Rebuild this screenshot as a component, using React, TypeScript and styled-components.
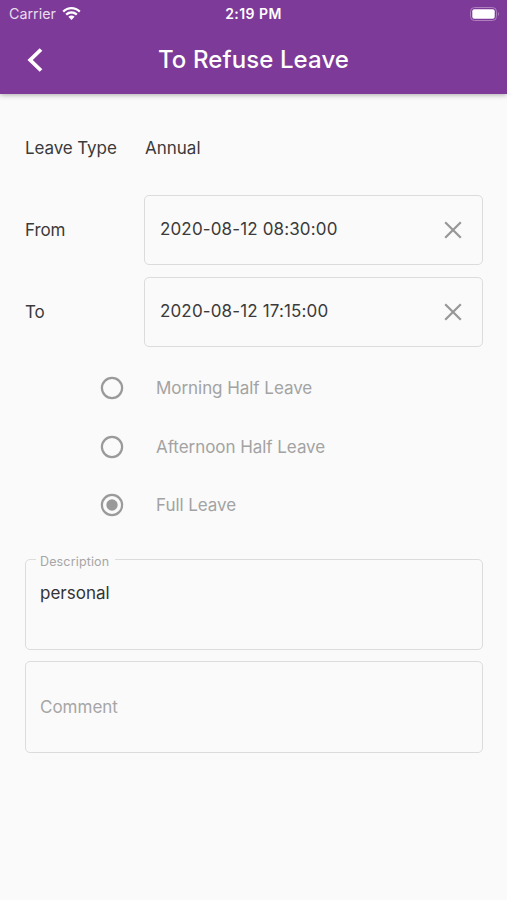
import React from "react";
import styled, { createGlobalStyle } from "styled-components";

const Global = createGlobalStyle`
  *{box-sizing:border-box}
  html,body{margin:0;background:#fafafa}
  body{font-family:Inter,"Liberation Sans",sans-serif;color:#3b3b3b}
`;
const Screen = styled.main`width:507px;height:900px;background:#fafafa;overflow:hidden;`;
const Header = styled.header`height:94px;background:#7d3a98;color:#fff;box-shadow:0 1px 5px rgba(0,0,0,.32);`;
const StatusBar = styled.div`height:27px;display:grid;grid-template-columns:1fr auto 1fr;align-items:center;padding:0 7px 0 9px;`;
const Carrier = styled.div`display:flex;align-items:center;gap:6px;color:#e9dcef;font-size:14.3px;`;
const Wifi = styled.svg`margin-top:-2px;`;
const Time = styled.div`font-weight:600;font-size:14px;letter-spacing:.45px;padding-right:2px;`;
const Battery = styled.div`display:flex;justify-content:flex-end;`;
const TitleBar = styled.div`height:65px;display:grid;grid-template-columns:70px 1fr 70px;align-items:center;`;
const Back = styled.button`border:0;background:none;padding:0;display:flex;justify-content:center;`;
const Title = styled.h1`margin:0;text-align:center;font-size:24px;font-weight:500;letter-spacing:.1px;`;
const Form = styled.div`padding:29px 24px 0 25px;font-size:17px;`;
const Row = styled.div<{ $h: number; $mb: number }>`display:grid;grid-template-columns:119px 1fr;align-items:center;height:${p => p.$h}px;margin-bottom:${p => p.$mb}px;`;
const Label = styled.span`letter-spacing:-.1px;`;
const Value = styled.span`padding-left:1px;`;
const DateField = styled.div`height:70px;border:1px solid #dcdcdc;border-radius:5px;display:flex;align-items:center;justify-content:space-between;padding:0 20px 0 15px;letter-spacing:.14px;`;
const DateText = styled.span`padding-bottom:2px;`;
const Options = styled.div`padding:12px 0 0 75px;letter-spacing:-.05px;`;
const Option = styled.div`height:58.6px;display:flex;align-items:center;gap:32px;color:#a3a3a3;`;
const Area = styled.fieldset<{ $top: number; $h: number }>`margin:${p => p.$top}px 0 0;height:${p => p.$h}px;border:1px solid #dcdcdc;border-radius:5px;padding:0 14px;min-width:0;`;
const Legend = styled.legend`font-size:12.5px;line-height:12px;height:16px;letter-spacing:.15px;color:#a6a6a6;padding:4px 6px 0 4px;margin-left:-4px;`;
const Content = styled.div<{ $muted?: boolean; $top: number }>`padding-top:${p => p.$top}px;color:${p => p.$muted ? "#a6a6a6" : "#333"};line-height:20px;`;

const Clear = () => <svg width="18" height="18" viewBox="0 0 18 18"><path d="M1.2 1.2l15.6 15.6m0-15.6L1.2 16.8" stroke="#979797" strokeWidth="2.2" /></svg>;
const Radio = ({ on }: { on?: boolean }) => <svg width="24" height="24" viewBox="0 0 24 24"><circle cx="12" cy="12" r="10.1" fill="none" stroke="#9a9a9a" strokeWidth="2.2" />{on && <circle cx="12" cy="12" r="5.7" fill="#9a9a9a" />}</svg>;

export default function App() {
  return <><Global /><Screen>
    <Header>
      <StatusBar>
        <Carrier>Carrier<Wifi width="19" height="14" viewBox="0 0 19 14" fill="#fff"><path d="M.4 4.8C5.4-.4 13.6-.4 18.6 4.8L17 6.4C12.8 2.3 6.2 2.3 2 6.4Z" /><path d="M3.4 7.8c3.5-3.3 8.7-3.3 12.2 0L14 9.4c-2.6-2.3-6.4-2.3-9 0Z" /><path d="M6.4 10.8c1.8-1.6 4.4-1.6 6.2 0L9.5 13.9Z" /></Wifi></Carrier>
        <Time>2:19 PM</Time>
        <Battery><svg width="30" height="14" viewBox="0 0 30 14"><rect x=".5" y=".5" width="26" height="13" rx="4" fill="none" stroke="#ad7fbf" /><rect x="2.3" y="2.3" width="22.4" height="9.4" rx="2" fill="#fff" /><path d="M28 5q2 2 0 4z" fill="#ad7fbf" /></svg></Battery>
      </StatusBar>
      <TitleBar><Back aria-label="Back"><svg width="16" height="26" viewBox="0 0 16 26"><path d="M14 2.5L3.2 13L14 23.5" fill="none" stroke="#fff" strokeWidth="3.8" /></svg></Back><Title>To Refuse Leave</Title></TitleBar>
    </Header>
    <Form>
      <Row $h={50} $mb={22}><Label>Leave Type</Label><Value>Annual</Value></Row>
      <Row $h={70} $mb={12}><Label>From</Label><DateField><DateText>2020-08-12 08:30:00</DateText><Clear /></DateField></Row>
      <Row $h={70} $mb={0}><Label>To</Label><DateField><DateText>2020-08-12 17:15:00</DateText><Clear /></DateField></Row>
      <Options><Option><Radio />Morning Half Leave</Option><Option><Radio />Afternoon Half Leave</Option><Option><Radio on />Full Leave</Option></Options>
      <Area $top={17} $h={98}><Legend>Description</Legend><Content $top={15}>personal</Content></Area>
      <Area $top={11} $h={92}><Content $muted $top={35}>Comment</Content></Area>
    </Form>
  </Screen></>;
}
